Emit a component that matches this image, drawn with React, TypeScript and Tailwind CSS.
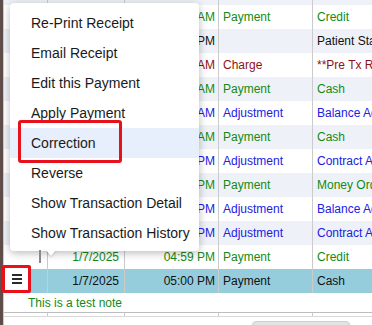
import React from 'react';

type Tone = 'green' | 'blue' | 'red' | 'black';

interface Txn {
    date: string;
    time: string;
    type: string;
    method: string;
    tone: Tone;
    selected?: boolean;
}

const toneClass: Record<Tone, string> = {
    green: 'text-[#138a13]',
    blue: 'text-[#2020e4]',
    red: 'text-[#8e1212]',
    black: 'text-[#111111]',
};

const rows: Txn[] = [
    { date: '1/6/2025', time: '09:12 AM', type: 'Payment', method: 'Credit', tone: 'green' },
    { date: '1/6/2025', time: '12:40 PM', type: '', method: 'Patient Statement', tone: 'black' },
    { date: '1/7/2025', time: '08:05 AM', type: 'Charge', method: '**Pre Tx Review', tone: 'red' },
    { date: '1/7/2025', time: '08:31 AM', type: 'Payment', method: 'Cash', tone: 'green' },
    { date: '1/7/2025', time: '09:02 AM', type: 'Adjustment', method: 'Balance Adjustment', tone: 'blue' },
    { date: '1/7/2025', time: '11:45 AM', type: 'Payment', method: 'Cash', tone: 'green' },
    { date: '1/7/2025', time: '01:15 PM', type: 'Adjustment', method: 'Contract Adjustment', tone: 'blue' },
    { date: '1/7/2025', time: '02:20 PM', type: 'Payment', method: 'Money Order', tone: 'green' },
    { date: '1/7/2025', time: '03:10 PM', type: 'Adjustment', method: 'Balance Adjustment', tone: 'blue' },
    { date: '1/7/2025', time: '03:48 PM', type: 'Adjustment', method: 'Contract Adjustment', tone: 'blue' },
    { date: '1/7/2025', time: '04:59 PM', type: 'Payment', method: 'Credit', tone: 'green' },
    { date: '1/7/2025', time: '05:00 PM', type: 'Payment', method: 'Cash', tone: 'black', selected: true },
];

const menuItems = [
    'Re-Print Receipt',
    'Email Receipt',
    'Edit this Payment',
    'Apply Payment',
    'Correction',
    'Reverse',
    'Show Transaction Detail',
    'Show Transaction History',
];

const grid = 'grid grid-cols-[44px_77px_94px_94px_1fr] shrink-0';
const cell = 'border-r border-[#cbcbcb] whitespace-nowrap overflow-hidden flex items-center';

const App: React.FC = () => {
    return (
        <div
            className="relative w-[372px] h-[325px] overflow-hidden bg-white flex"
            style={{ fontFamily: '"Liberation Sans", Arial, sans-serif' }}
        >
            {/* page edge behind the grid */}
            <div className="w-[3px] shrink-0 bg-[#5e4d48]" />

            <div className="flex-1 flex flex-col border-l border-[#cbcbcb] text-[12px]">
                {/* tail of the row above */}
                <div className={`${grid} h-[5px] bg-[#eef2f8]`}>
                    <div className={cell} />
                    <div className={cell} />
                    <div className={cell} />
                    <div className={cell} />
                    <div />
                </div>

                {rows.map((r, i) => {
                    const bg = r.selected ? 'bg-[#95cddc]' : i % 2 === 1 ? 'bg-[#eef2f8]' : 'bg-white';
                    const tc = toneClass[r.tone];
                    return (
                        <div key={i} className={`${grid} h-[24px] ${bg}`}>
                            <div className={`${cell} overflow-visible ${r.selected ? 'border-[#b9d9e2]' : ''}`}>
                                {r.selected && (
                                    <div className="ml-[-2px] mt-[-4px] w-[29px] h-[28px] shrink-0 border-[3px] border-[#e8111b] rounded-[2px] bg-white flex flex-col items-center justify-center gap-[2px] z-10">
                                        <span className="block w-[10px] h-[2px] bg-[#2a2a2a]" />
                                        <span className="block w-[10px] h-[2px] bg-[#2a2a2a]" />
                                        <span className="block w-[10px] h-[2px] bg-[#2a2a2a]" />
                                    </div>
                                )}
                            </div>
                            <div className={`${cell} justify-end pr-[5px] ${tc}`}>{r.date}</div>
                            <div className={`${cell} justify-end pr-[3px] ${tc}`}>{r.time}</div>
                            <div className={`${cell} pl-[4px] ${tc}`}>{r.type}</div>
                            <div className={`whitespace-nowrap overflow-hidden flex items-center pl-[4px] ${tc}`}>{r.method}</div>
                        </div>
                    );
                })}

                {/* note row */}
                <div className="h-[20px] shrink-0 flex items-center pl-[24px] text-[#138a13] border-b border-[#bdbdbd]">
                    This is a test note
                </div>
                <div className={`${grid} h-[4px] border-b border-[#d8d8d8]`}>
                    <div className={cell} />
                    <div className={cell} />
                    <div className={cell} />
                    <div className={cell} />
                    <div />
                </div>
                <div className="flex-1 shrink-0 pl-[248px] pt-[4px]">
                    <div className="w-[98px] h-[10px] rounded-[4px] bg-[#e3e3e3] border border-[#d0d0d0]" />
                </div>
            </div>

            {/* context menu */}
            <div className="absolute left-[10px] top-[3px] w-[189px] bg-white rounded-[4px] pt-[5px] pb-[3px] shadow-[0_2px_8px_rgba(0,0,0,0.28)] text-[14px] text-[#1a1a1a]">
                {menuItems.map((m) => (
                    <div
                        key={m}
                        className={`h-[30px] flex items-center pl-[21px] whitespace-nowrap ${m === 'Correction' ? 'bg-[#e6effb]' : ''}`}
                    >
                        {m}
                    </div>
                ))}
                <div className="absolute left-[8px] top-[117px] w-[104px] h-[43px] border-[3px] border-[#e8111b] rounded-[3px]" />
            </div>

            {/* popover caret */}
            <div className="absolute left-[46px] top-[250px] w-0 h-0 border-l-[5px] border-r-[5px] border-t-[6px] border-l-transparent border-r-transparent border-t-white drop-shadow-[0_1px_1px_rgba(0,0,0,0.2)]" />
            <div className="absolute left-[39px] top-[250px] w-[2px] h-[13px] bg-[#8a8a8a]" />
        </div>
    );
};

export default App;
